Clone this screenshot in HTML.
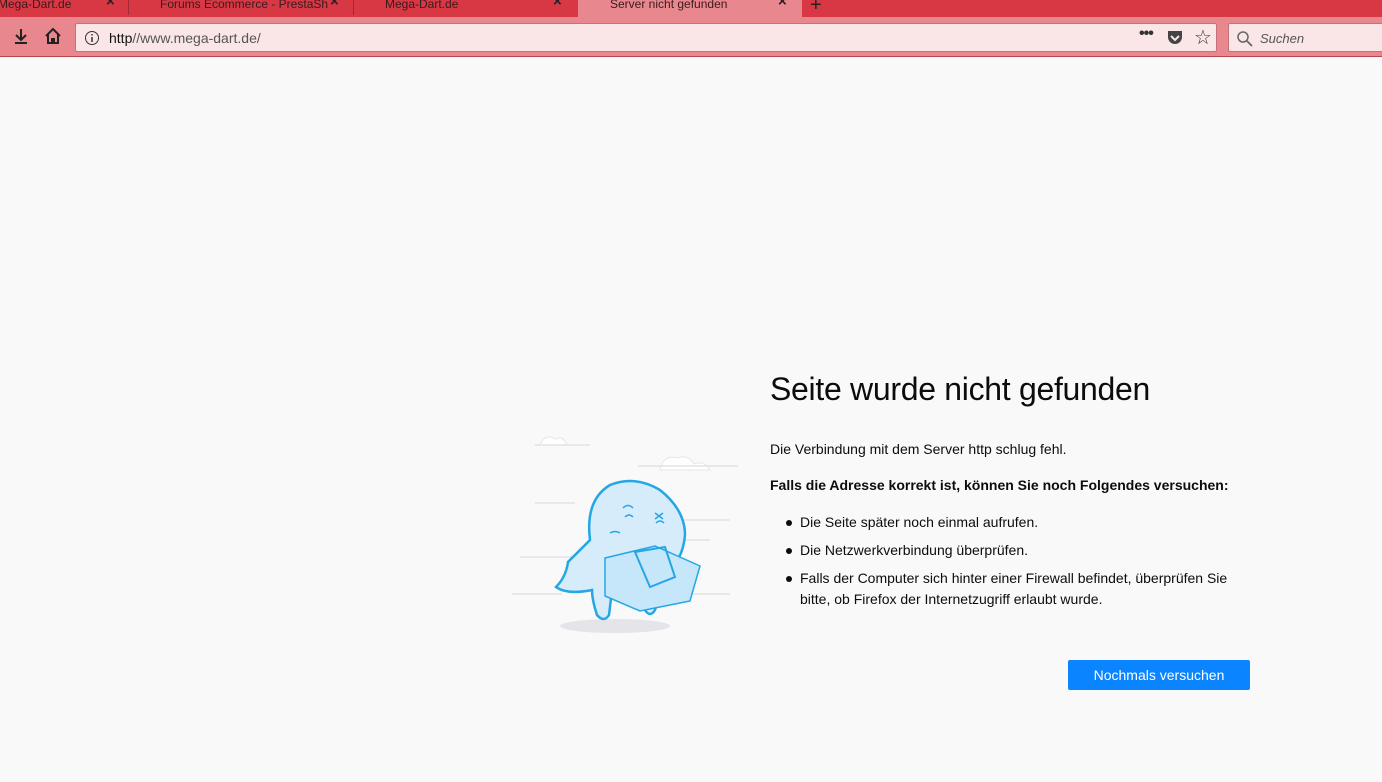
<!DOCTYPE html>
<html><head><meta charset="utf-8"><style>
*{margin:0;padding:0;box-sizing:border-box}
body{width:1382px;height:782px;overflow:hidden;background:#f9f9fa;font-family:"Liberation Sans",sans-serif;position:relative}
.tabs{position:absolute;left:0;top:0;width:1382px;height:17px;background:#d73844}
.tab{position:absolute;top:0;height:17px;font-size:12px;color:#3a1a1e;line-height:8px;overflow:hidden;white-space:nowrap}
.x{position:absolute;top:-2px;font-size:15px;color:#222;font-weight:bold}
.nav{position:absolute;left:0;top:17px;width:1382px;height:40px;background:#e8878e;border-bottom:1px solid #b8444c}
.url{position:absolute;left:75px;top:6px;width:1142px;height:29px;background:#fbe6e7;border:1px solid #c9717a;border-radius:2px}
.search{position:absolute;left:1228px;top:6px;width:160px;height:29px;background:#fbe6e7;border:1px solid #c9717a;border-radius:2px}
h1{position:absolute;left:770px;top:371px;font-size:32px;font-weight:normal;color:#0c0c0d;letter-spacing:-0.3px}
.p{position:absolute;left:770px;font-size:14px;color:#0c0c0d}
ul{position:absolute;left:800px;top:512px;font-size:14px;color:#0c0c0d;list-style:none;width:455px}
li{position:relative;line-height:21px;margin-bottom:7px}
li:before{content:"";position:absolute;left:-14px;top:8px;width:6px;height:6px;border-radius:50%;background:#0c0c0d}
.btn{position:absolute;left:1068px;top:660px;width:182px;height:30px;background:#0a84ff;border-radius:2px;color:#fff;font-size:14px;text-align:center;line-height:30px}
</style></head><body>
<div class="tabs">
 <div class="tab" style="left:0;width:128px;"><span style="position:absolute;left:-2px;top:0">Mega-Dart.de</span><span class="x" style="left:106px">×</span></div>
 <div style="position:absolute;left:128px;top:0;width:1px;height:15px;background:#a02a33"></div>
 <div class="tab" style="left:130px;width:222px"><span style="position:absolute;left:30px;top:0">Forums Ecommerce - PrestaSh</span><span class="x" style="left:200px">×</span></div>
 <div style="position:absolute;left:353px;top:0;width:1px;height:15px;background:#a02a33"></div>
 <div class="tab" style="left:355px;width:222px"><span style="position:absolute;left:30px;top:0">Mega-Dart.de</span><span class="x" style="left:198px">×</span></div>
 <div class="tab" style="left:578px;width:224px;background:#e8878e"><span style="position:absolute;left:32px;top:0">Server nicht gefunden</span><span class="x" style="left:200px">×</span></div>
 <div style="position:absolute;left:810px;top:-6px;font-size:20px;color:#222">+</div>
</div>
<div class="nav">
 <svg style="position:absolute;left:12px;top:10px" width="18" height="18" viewBox="0 0 18 18"><path d="M9 2v10M4 8l5 5 5-5M3 16h12" stroke="#222" stroke-width="2" fill="none"/></svg>
 <svg style="position:absolute;left:44px;top:10px" width="18" height="18" viewBox="0 0 18 18"><path d="M2 9L9 2l7 7M4 7v9h4v-4h2v4h4V7" stroke="#222" stroke-width="2" fill="none"/></svg>
 <div class="url">
  <svg style="position:absolute;left:8px;top:6px" width="16" height="16" viewBox="0 0 16 16"><circle cx="8" cy="8" r="6.5" stroke="#333" fill="none"/><path d="M8 7v5M8 4v1.5" stroke="#333" stroke-width="1.5"/></svg>
  <span style="position:absolute;left:33px;top:6px;font-size:14px;color:#111">http<span style="color:#555">//www.mega-dart.de/</span></span>
  <span style="position:absolute;left:1063px;top:1px;font-size:16px;color:#333;font-weight:bold;letter-spacing:-1px">•••</span>
  <svg style="position:absolute;left:1090px;top:6px" width="18" height="16" viewBox="0 0 18 16"><path d="M2 1h14v6a7 7 0 0 1-14 0z" fill="#444"/><path d="M5 6l4 4 4-4" stroke="#fbe6e7" stroke-width="2" fill="none"/></svg>
  <span style="position:absolute;left:1118px;top:1px;font-size:20px;color:#333">☆</span>
 </div>
 <div class="search">
  <svg style="position:absolute;left:7px;top:6px" width="18" height="18" viewBox="0 0 18 18"><circle cx="7" cy="7" r="5" stroke="#666" stroke-width="1.5" fill="none"/><path d="M11 11l5 5" stroke="#666" stroke-width="1.8"/></svg>
  <span style="position:absolute;left:31px;top:7px;font-size:13px;font-style:italic;color:#555">Suchen</span>
 </div>
</div>
<svg style="position:absolute;left:500px;top:420px" width="250" height="220" viewBox="0 0 250 220">
 <g fill="#fff" stroke="#e6e6ea"><path d="M40 25q5-12 15-6q8-4 12 6z"/><path d="M160 50q3-16 18-12q10-4 16 6q10-4 16 6z"/></g>
 <g stroke="#e3e3e7" stroke-width="1.5"><path d="M35 25h55M138 46h100M35 83h40M20 137h60M180 100h50M12 174h50M190 174h40M180 120h30"/></g>
 <ellipse cx="115" cy="206" rx="55" ry="7" fill="#e5e5e9"/>
 <path d="M90 120q-5-40 20-55q25-10 50 5q25 20 25 45q-2 25-20 40l-10 35q-5 8-10 0l-3-20h-30l-3 25q-5 8-12 0q-5-15-5-25q-25 5-36-3q10-10 12-25z" fill="#d6ecfb" stroke="#25a6e5" stroke-width="2.5"/>
 <path d="M105 138l50-12 45 20-10 35-50 10-35-15z" fill="#c6e6fa" stroke="#25a6e5" stroke-width="1.5"/>
 <path d="M135 132l30-5 10 30-25 10z" fill="none" stroke="#25a6e5" stroke-width="2"/>
 <g stroke="#25a6e5" stroke-width="1.5" fill="none"><path d="M123 88q5-5 10 0M125 97q4-4 8 0M155 93l8 6M163 93l-8 6M156 103q4-4 8 0M110 113q5-3 10 0"/></g>
</svg>
<h1>Seite wurde nicht gefunden</h1>
<div class="p" style="top:441px">Die Verbindung mit dem Server http schlug fehl.</div>
<div class="p" style="top:477px;font-weight:bold">Falls die Adresse korrekt ist, können Sie noch Folgendes versuchen:</div>
<ul>
<li>Die Seite später noch einmal aufrufen.</li>
<li>Die Netzwerkverbindung überprüfen.</li>
<li>Falls der Computer sich hinter einer Firewall befindet, überprüfen Sie bitte, ob Firefox der Internetzugriff erlaubt wurde.</li>
</ul>
<div class="btn">Nochmals versuchen</div>
</body></html>
